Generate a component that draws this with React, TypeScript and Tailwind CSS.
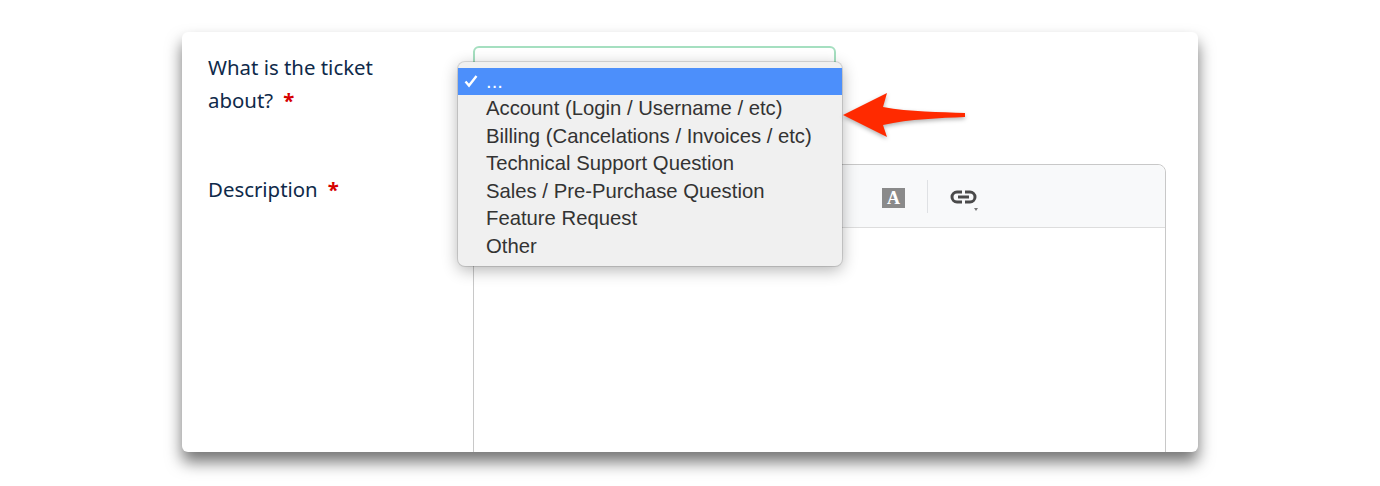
const options = [
  "Account (Login / Username / etc)",
  "Billing (Cancelations / Invoices / etc)",
  "Technical Support Question",
  "Sales / Pre-Purchase Question",
  "Feature Request",
  "Other",
];

function Required() {
  return <span className="ml-[10px] text-[#d60000] font-bold">*</span>;
}

function SelectMenu() {
  return (
    <div className="absolute left-[458px] top-[62px] w-[383.5px] h-[204px] pt-[6px] bg-[#f0f0f0] rounded-[7px] shadow-[0_0_0_1px_rgba(0,0,0,0.12),0_4px_16px_rgba(0,0,0,0.3)] font-['Liberation_Sans',sans-serif] text-[20.3px] text-[#333333]">
      <div className="relative h-[27px] pl-[28px] bg-[#4c8ffb] text-white leading-[27px]">
        <svg className="absolute left-[6px] top-[6px]" width="14" height="14" viewBox="0 0 14 14" fill="none">
          <path d="M1.5 7.5 5 11.5 12.5 2" stroke="white" strokeWidth="2.4" />
        </svg>
        ...
      </div>
      {options.map((option) => (
        <div key={option} className="h-[27.5px] pl-[28px] leading-[27.5px] whitespace-nowrap">
          {option}
        </div>
      ))}
    </div>
  );
}

function Arrow() {
  return (
    <svg className="absolute left-[840px] top-[88px] drop-shadow-[0_2px_2px_rgba(0,0,0,0.3)]" width="130" height="54" viewBox="0 0 130 54">
      <path d="M3 27 47 5 43 19 C70 24 100 24 125 25 L125 29 C100 30 70 31 43 37 L47 49 Z" fill="#ff2a00" />
    </svg>
  );
}

function Toolbar() {
  return (
    <div className="h-[63px] flex items-center justify-end bg-[#f8f9fa] border-b border-[#dddddd] rounded-t-[8px] pr-[188px]">
      <div className="w-[23px] h-[20px] mt-[3px] bg-[#8a8a8a] text-white text-center font-['Liberation_Serif',serif] font-bold text-[18px] leading-[20px]">
        A
      </div>
      <div className="w-px h-[33px] mx-[22px] bg-[#dfe1e4]" />
      <div className="relative w-[27px] h-[16px] mt-[2px]">
        <svg width="27" height="16" viewBox="0 0 27 16" fill="none" stroke="#4a4a4a" strokeWidth="3">
          <path d="M12 3H7a5 5 0 0 0 0 10h5" />
          <path d="M15 3h5a5 5 0 0 1 0 10h-5" />
          <path d="M8 8h11" />
        </svg>
        <div className="absolute left-[24px] top-[19px] border-x-[2.5px] border-x-transparent border-t-[3px] border-t-[#777777]" />
      </div>
    </div>
  );
}

export default function App() {
  return (
    <div className="relative h-[486px] bg-white overflow-hidden pt-[32px] pl-[182px] font-['Noto_Sans',sans-serif]">
      <div className="w-[1016px] h-[420px] bg-white rounded-[6px] overflow-hidden shadow-[0_10px_16px_rgba(0,0,0,0.55)] pl-[26px] pr-[32px] pt-[14px] text-[20.4px] leading-[33px] text-[#0f2a4a]">
        <div className="flex h-[118px]">
          <div className="w-[265px] shrink-0 pt-[5px]">
            What is the ticket
            <br />
            about?
            <Required />
          </div>
          <div className="w-[363px] h-[40px] bg-white border-2 border-[#a5dfc0] rounded-[6px]" />
        </div>
        <div className="flex">
          <div className="w-[265px] shrink-0 pt-[9px]">
            Description
            <Required />
          </div>
          <div className="flex-1 h-[300px] border border-[#c8c8c8] rounded-t-[8px]">
            <Toolbar />
          </div>
        </div>
      </div>
      <SelectMenu />
      <Arrow />
    </div>
  );
}
